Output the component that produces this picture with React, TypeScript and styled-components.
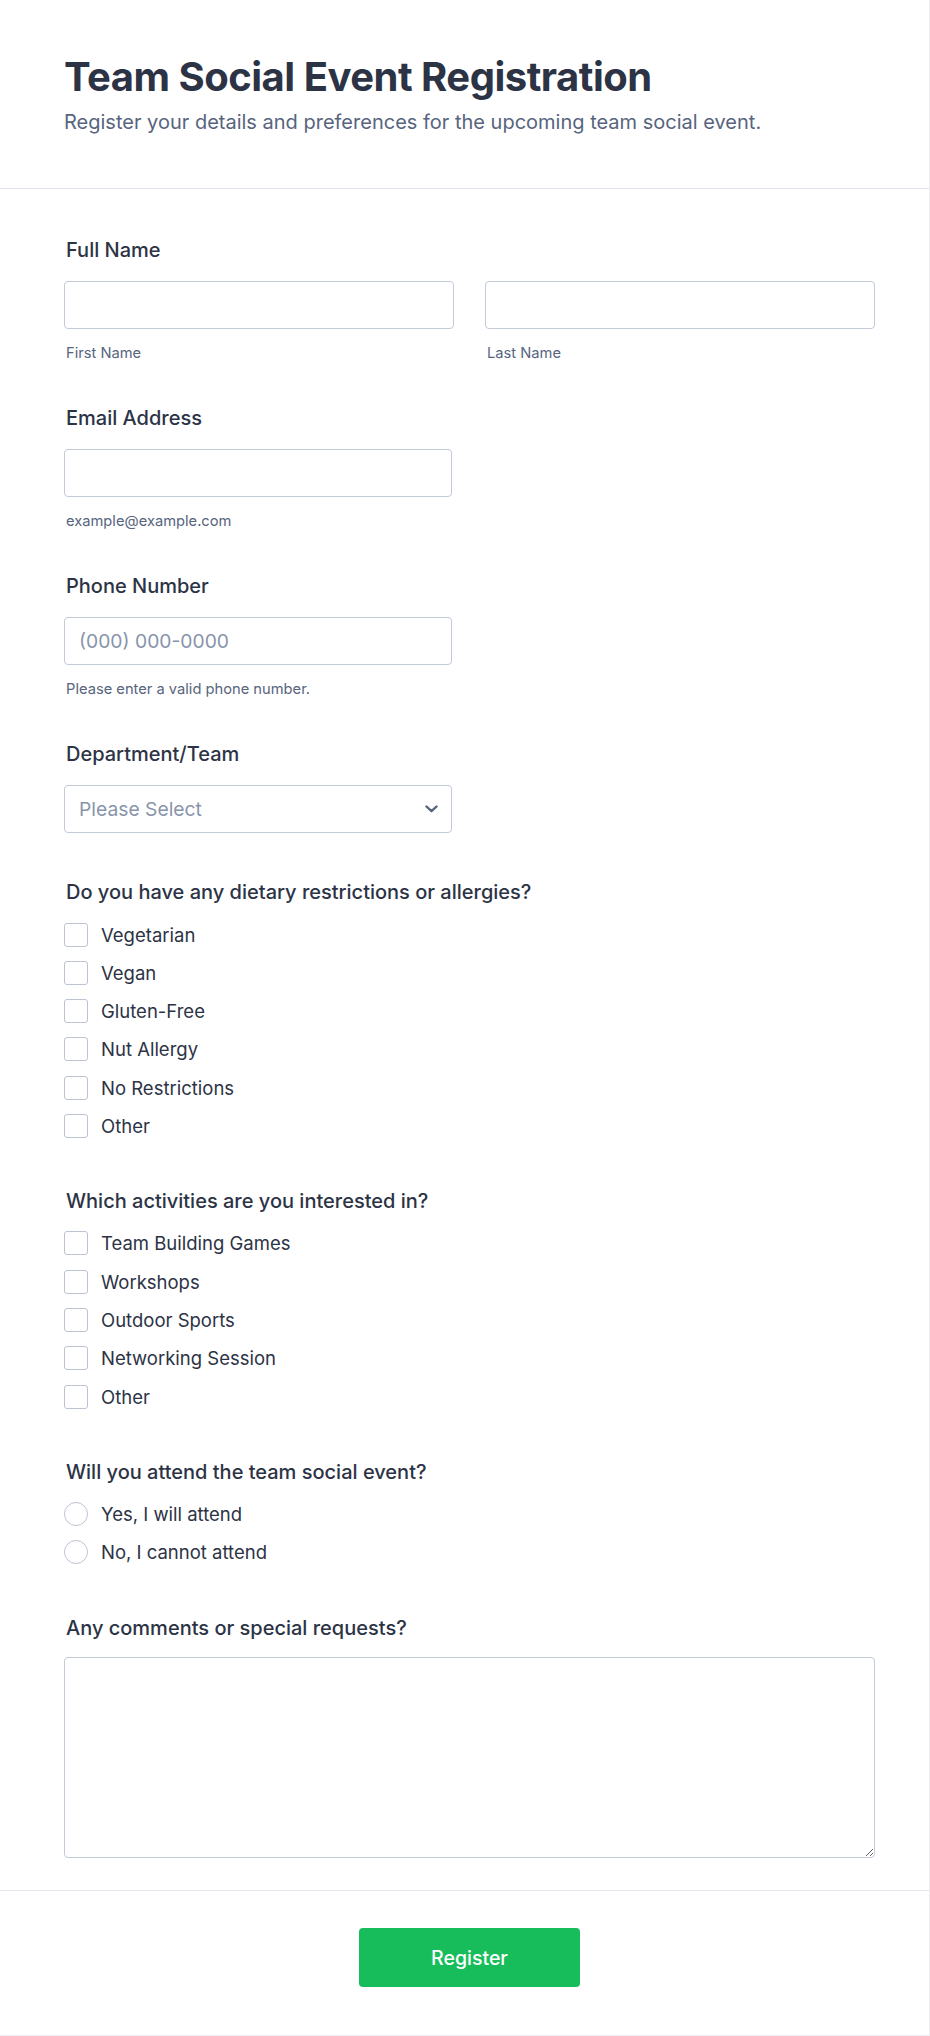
import React from "react";
import styled, { createGlobalStyle } from "styled-components";

const GlobalStyle = createGlobalStyle`
    html, body {
        margin: 0;
        padding: 0;
        background: #ffffff;
    }
    body {
        font-family: Inter, "Noto Sans", "Liberation Sans", sans-serif;
        color: #2c3345;
    }
    * {
        box-sizing: border-box;
    }
`

const Form = styled.form`
    width: 930px;
    min-height: 2036px;
    background: #ffffff;
    border-right: 1px solid #ececf2;
    border-bottom: 1px solid #ececf2;
    display: flex;
    flex-direction: column;
`

const Header = styled.header`
    padding: 53px 64px 51px;
    border-bottom: 1px solid #dfe1ec;
`

const Title = styled.h1`
    margin: 0 0 6px;
    font-size: 40px;
    line-height: 48px;
    font-weight: 700;
    letter-spacing: -0.5px;
    color: #2c3345;
`

const Subtitle = styled.p`
    margin: 0;
    font-size: 20px;
    line-height: 30px;
    color: #57647e;
`

const Body = styled.div`
    width: 811px;
    margin-left: 64px;
    padding: 48px 0 32px;
    display: flex;
    flex-direction: column;
`

const Field = styled.div<{ $space?: number }>`
    display: flex;
    flex-direction: column;
    margin-top: ${p => p.$space ?? 0}px;
`

const Label = styled.label<{ $gap?: number }>`
    font-size: 20px;
    line-height: 27px;
    font-weight: 500;
    color: #2c3345;
    padding-left: 2px;
    margin-bottom: ${p => p.$gap ?? 17}px;
`

const Pair = styled.div`
    display: grid;
    grid-template-columns: 1fr 1fr;
    column-gap: 31px;
`

const Col = styled.div`
    display: flex;
    flex-direction: column;
`

const TextInput = styled.input<{ $half?: boolean }>`
    width: ${p => (p.$half ? "388px" : "100%")};
    height: 48px;
    border: 1px solid #c3cad8;
    border-radius: 4px;
    padding: 0 14px;
    font-family: inherit;
    font-size: 19.3px;
    color: #2c3345;
    background: #ffffff;
    outline: none;
    &::placeholder {
        color: #8894ab;
    }
`

const SubLabel = styled.span`
    margin-top: 14px;
    font-size: 14.7px;
    line-height: 21px;
    color: #57647e;
    padding-left: 2px;
`

const SelectBox = styled.div`
    width: 388px;
    height: 48px;
    border: 1px solid #c3cad8;
    border-radius: 4px;
    padding: 0 13px 0 14px;
    display: flex;
    align-items: center;
    justify-content: space-between;
    font-size: 19.3px;
    color: #8894ab;
    background: #ffffff;
`

const Options = styled.div`
    display: flex;
    flex-direction: column;
    gap: 11.3px;
`

const Option = styled.label`
    display: flex;
    align-items: center;
    gap: 13px;
    height: 27px;
    font-size: 18.5px;
    color: #2c3345;
`

const Box = styled.span<{ $round?: boolean }>`
    width: 24px;
    height: 24px;
    flex: none;
    border: 1px solid #bcc3d2;
    border-radius: ${p => (p.$round ? "50%" : "3px")};
    background: #ffffff;
`

const TextArea = styled.textarea`
    width: 100%;
    height: 201px;
    border: 1px solid #c3cad8;
    border-radius: 4px;
    padding: 12px 14px;
    font-family: inherit;
    font-size: 18px;
    resize: vertical;
    outline: none;
    display: block;
`

const Footer = styled.footer`
    padding: 38px 0 48px;
    width: 811px;
    margin-left: 64px;
    display: flex;
    justify-content: center;
    position: relative;
    &::before {
        content: "";
        position: absolute;
        top: 0;
        left: -64px;
        width: 929px;
        border-top: 1px solid #e3e4ee;
    }
`

const Submit = styled.button`
    width: 221px;
    height: 59px;
    border: none;
    border-radius: 4px;
    background: #18bd5b;
    color: #ffffff;
    font-family: inherit;
    font-size: 19.5px;
    font-weight: 500;
    cursor: pointer;
`

const Chevron = () => (
    <svg width="13" height="8" viewBox="0 0 13 8" fill="none">
        <path d="M1.5 1.5 L6.5 6.2 L11.5 1.5" stroke="#57647e" strokeWidth="2.4" strokeLinecap="round" strokeLinejoin="round" />
    </svg>
)

const OptionGroup = ({ items, round }: { items: string[], round?: boolean }) => (
    <Options>
        {items.map(item => (
            <Option key={item}>
                <Box $round={round} />
                {item}
            </Option>
        ))}
    </Options>
)

const dietary = ["Vegetarian", "Vegan", "Gluten-Free", "Nut Allergy", "No Restrictions", "Other"]
const activities = ["Team Building Games", "Workshops", "Outdoor Sports", "Networking Session", "Other"]
const attendance = ["Yes, I will attend", "No, I cannot attend"]

export default function App() {
    return (
        <>
            <GlobalStyle />
            <Form onSubmit={e => e.preventDefault()}>
                <Header>
                    <Title>Team Social Event Registration</Title>
                    <Subtitle>Register your details and preferences for the upcoming team social event.</Subtitle>
                </Header>
                <Body>
                    <Field>
                        <Label>Full Name</Label>
                        <Pair>
                            <Col>
                                <TextInput type="text" />
                                <SubLabel>First Name</SubLabel>
                            </Col>
                            <Col>
                                <TextInput type="text" />
                                <SubLabel>Last Name</SubLabel>
                            </Col>
                        </Pair>
                    </Field>
                    <Field $space={41}>
                        <Label>Email Address</Label>
                        <TextInput type="email" $half />
                        <SubLabel>example@example.com</SubLabel>
                    </Field>
                    <Field $space={41}>
                        <Label>Phone Number</Label>
                        <TextInput type="tel" $half placeholder="(000) 000-0000" />
                        <SubLabel>Please enter a valid phone number.</SubLabel>
                    </Field>
                    <Field $space={41}>
                        <Label>Department/Team</Label>
                        <SelectBox>
                            <span>Please Select</span>
                            <Chevron />
                        </SelectBox>
                    </Field>
                    <Field $space={46}>
                        <Label $gap={15}>Do you have any dietary restrictions or allergies?</Label>
                        <OptionGroup items={dietary} />
                    </Field>
                    <Field $space={48.5}>
                        <Label $gap={15}>Which activities are you interested in?</Label>
                        <OptionGroup items={activities} />
                    </Field>
                    <Field $space={48.5}>
                        <Label $gap={15}>Will you attend the team social event?</Label>
                        <OptionGroup items={attendance} round />
                    </Field>
                    <Field $space={49.5}>
                        <Label $gap={15}>Any comments or special requests?</Label>
                        <TextArea />
                    </Field>
                </Body>
                <Footer>
                    <Submit type="submit">Register</Submit>
                </Footer>
            </Form>
        </>
    )
}
